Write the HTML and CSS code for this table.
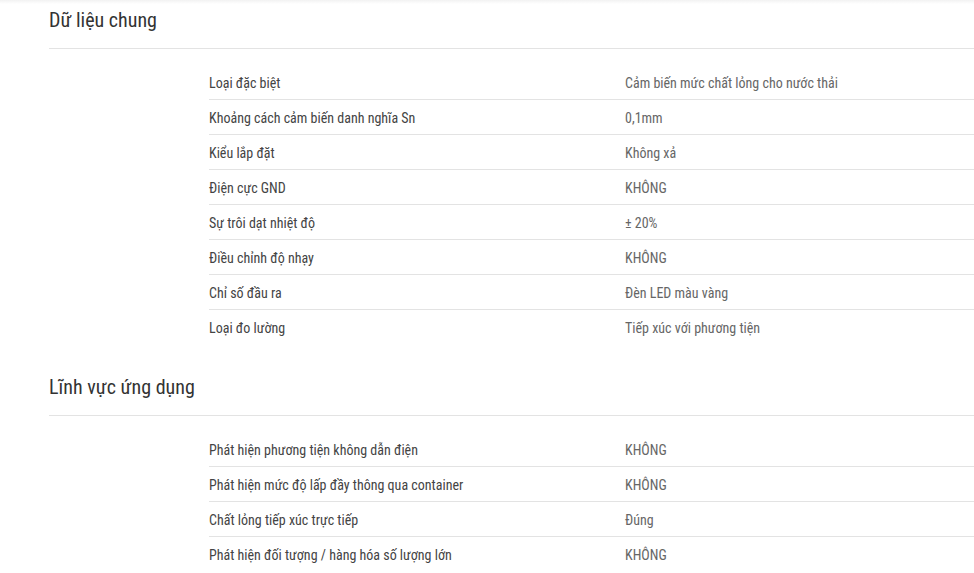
FILE: index.html
```html
<!DOCTYPE html>
<html lang="vi">
<head>
<meta charset="utf-8">
<title>Dữ liệu</title>
<link rel="stylesheet" href="styles.css">
</head>
<body>
<div class="topshade"></div>
<main class="page">
  <section class="group">
    <h2 class="group-title">Dữ liệu chung</h2>
    <div class="spec-table">
      <div class="spec-row"><div class="spec-label">Loại đặc biệt</div><div class="spec-value">Cảm biến mức chất lỏng cho nước thải</div></div>
      <div class="spec-row"><div class="spec-label">Khoảng cách cảm biến danh nghĩa Sn</div><div class="spec-value">0,1mm</div></div>
      <div class="spec-row"><div class="spec-label">Kiểu lắp đặt</div><div class="spec-value">Không xả</div></div>
      <div class="spec-row"><div class="spec-label">Điện cực GND</div><div class="spec-value">KHÔNG</div></div>
      <div class="spec-row"><div class="spec-label">Sự trôi dạt nhiệt độ</div><div class="spec-value">± 20%</div></div>
      <div class="spec-row"><div class="spec-label">Điều chỉnh độ nhạy</div><div class="spec-value">KHÔNG</div></div>
      <div class="spec-row"><div class="spec-label">Chỉ số đầu ra</div><div class="spec-value">Đèn LED màu vàng</div></div>
      <div class="spec-row"><div class="spec-label">Loại đo lường</div><div class="spec-value">Tiếp xúc với phương tiện</div></div>
    </div>
  </section>
  <section class="group">
    <h2 class="group-title">Lĩnh vực ứng dụng</h2>
    <div class="spec-table">
      <div class="spec-row"><div class="spec-label">Phát hiện phương tiện không dẫn điện</div><div class="spec-value">KHÔNG</div></div>
      <div class="spec-row"><div class="spec-label">Phát hiện mức độ lấp đầy thông qua container</div><div class="spec-value">KHÔNG</div></div>
      <div class="spec-row"><div class="spec-label">Chất lỏng tiếp xúc trực tiếp</div><div class="spec-value">Đúng</div></div>
      <div class="spec-row"><div class="spec-label">Phát hiện đối tượng / hàng hóa số lượng lớn</div><div class="spec-value">KHÔNG</div></div>
    </div>
  </section>
</main>
</body>
</html>
```
FILE: styles.css
```css
html, body {
  margin: 0;
  padding: 0;
  background: #fff;
}
body {
  font-family: "Roboto Condensed", Roboto, "Liberation Sans", sans-serif;
  font-stretch: condensed;
  overflow: hidden;
}
.topshade {
  position: absolute;
  top: 0;
  left: 0;
  right: 0;
  height: 4px;
  background: linear-gradient(#f2f2f2, #fff);
}
.page {
  position: relative;
  padding-left: 49px;
}
.group {
  margin-bottom: 23px;
}
.group-title {
  margin: 0;
  padding: 6px 0 14px;
  font-size: 20px;
  line-height: 28px;
  font-weight: 400;
  color: #333;
  border-bottom: 1px solid #e3e3e3;
}
.spec-table {
  margin: 16px 0 0 160px;
}
.spec-row {
  display: flex;
  box-sizing: content-box;
  height: 33px;
  padding-top: 1px;
  align-items: center;
  border-bottom: 1px solid #e3e3e3;
  font-size: 14px;
}
.spec-row:last-child {
  border-bottom: none;
}
.spec-label {
  width: 416px;
  color: #444;
}
.spec-value {
  color: #666;
}
```
